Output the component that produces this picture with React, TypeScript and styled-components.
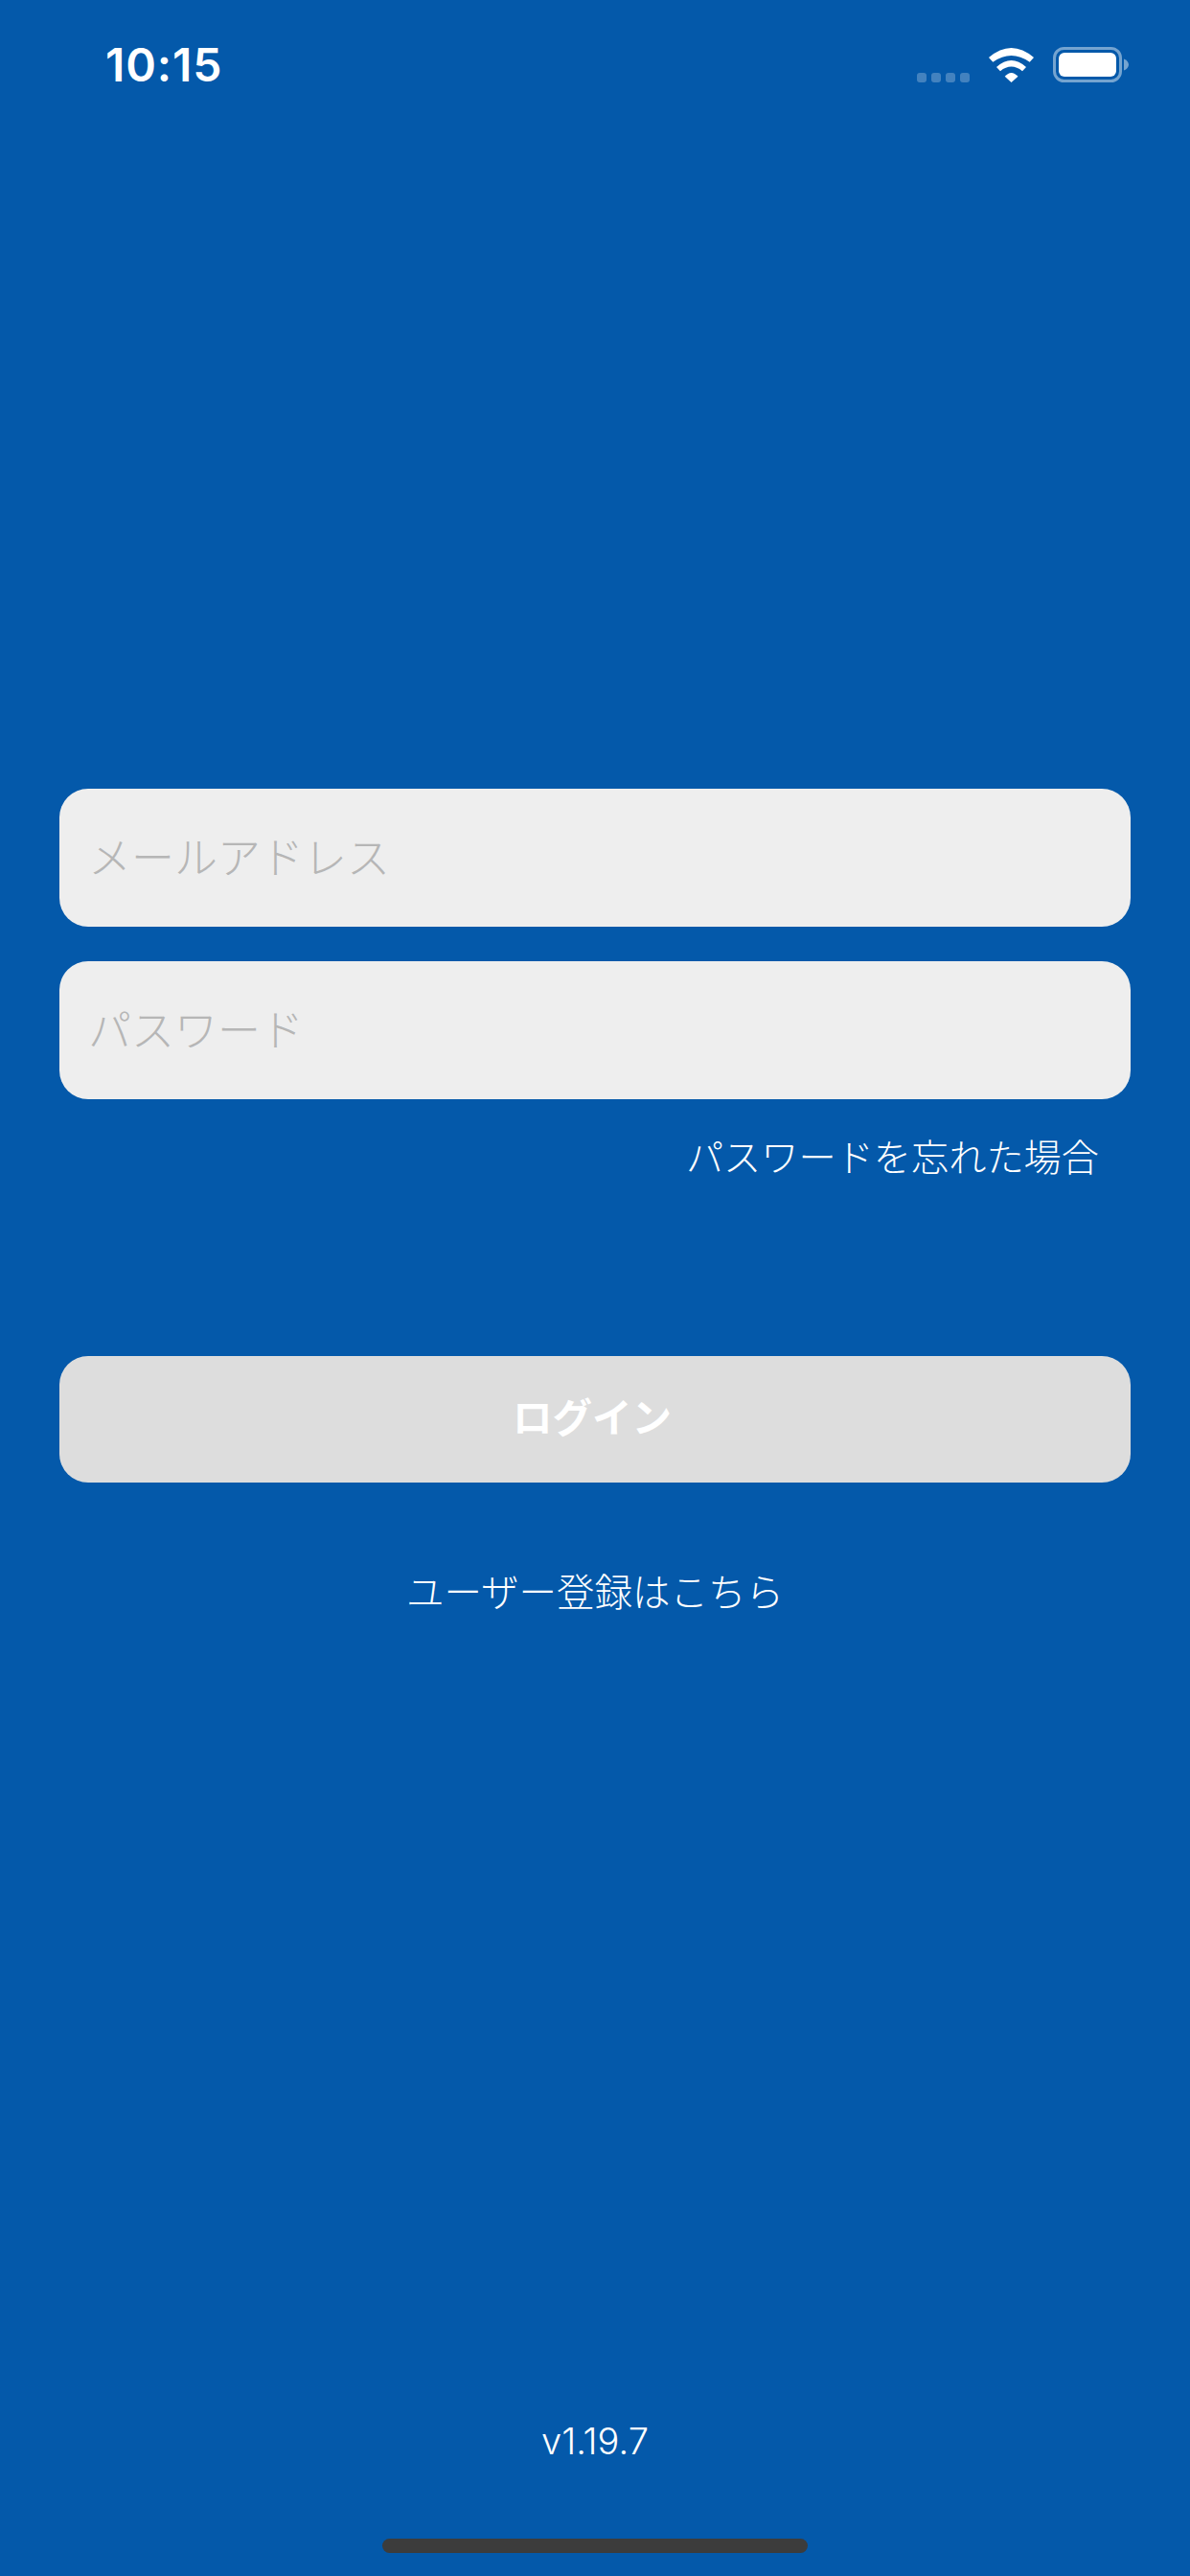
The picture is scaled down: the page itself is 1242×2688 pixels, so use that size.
import styled, { createGlobalStyle } from "styled-components";

const GlobalStyle = createGlobalStyle`
  html, body {
    margin: 0;
    padding: 0;
    background-color: #0459aa;
  }
`;

const Page = styled.div`
  display: flex;
  flex-direction: column;
  width: 1242px;
  height: 2688px;
  background-color: #0459aa;
  color: white;
  font-family: "Noto Sans CJK JP", sans-serif;
`;

const StatusBar = styled.div`
  display: flex;
  align-items: center;
  justify-content: space-between;
  height: 37px;
  padding: 49px 64px 0 110px;
`;

const Time = styled.span`
  font-family: Inter, "Liberation Sans", sans-serif;
  font-size: 48px;
  font-weight: 600;
  line-height: 37px;
  letter-spacing: 0.9px;
`;

const StatusIcons = styled.div`
  display: flex;
  align-items: flex-end;
`;

const SignalDots = styled.div`
  display: flex;
  gap: 5px;
  margin-right: 20px;
`;

const SignalDot = styled.span`
  width: 10px;
  height: 10px;
  border-radius: 3px;
  background-color: rgba(255, 255, 255, 0.25);
`;

const WifiIcon = styled.svg`
  display: block;
  width: 47px;
  height: 36px;
  margin-right: 20px;
`;

const BatteryIcon = styled.svg`
  display: block;
  width: 79px;
  height: 37px;
`;

const Form = styled.form`
  display: flex;
  flex-direction: column;
  margin: 737px 0 0;
  padding: 0 62px;
`;

const Field = styled.input<{ $gap?: boolean }>`
  box-sizing: border-box;
  width: 100%;
  height: 144px;
  margin-top: ${(p) => (p.$gap ? "36px" : "0")};
  padding: 0 30px 6px;
  border: none;
  border-radius: 30px;
  outline: none;
  background-color: #eeeeee;
  font-family: inherit;
  font-size: 45px;
  font-weight: 300;
  &::placeholder {
    color: #b6b6b6;
    opacity: 1;
  }
`;

const ForgotLink = styled.a`
  align-self: flex-end;
  margin-top: 28px;
  padding-right: 33px;
  font-size: 39.2px;
  font-weight: 300;
  line-height: 60px;
`;

const LoginButton = styled.button`
  height: 132px;
  margin-top: 180px;
  padding: 0 6px 8px 0;
  border: none;
  border-radius: 30px;
  background-color: #dddddd;
  color: white;
  font-family: inherit;
  font-size: 41.5px;
  font-weight: 700;
`;

const RegisterLink = styled.a`
  align-self: center;
  margin-top: 82px;
  font-size: 39.5px;
  font-weight: 300;
  line-height: 60px;
`;

const Footer = styled.div`
  display: flex;
  flex-direction: column;
  align-items: center;
  margin-top: auto;
  padding-bottom: 24px;
`;

const Version = styled.span`
  font-family: Inter, "Liberation Sans", sans-serif;
  font-size: 38px;
  font-weight: 300;
  line-height: 60px;
`;

const HomeBar = styled.div`
  width: 444px;
  height: 15px;
  margin-top: 72px;
  border-radius: 8px;
  background-color: #3c3c3c;
`;

export default function App() {
  return (
    <Page>
      <GlobalStyle />
      <StatusBar>
        <Time>10:15</Time>
        <StatusIcons>
          <SignalDots>
            {[1, 2, 3, 4].map((n) => (
              <SignalDot key={n} />
            ))}
          </SignalDots>
          <WifiIcon viewBox="0 0 47 36" fill="white">
            <path d="M0 10Q23.5 -10 47 10L42.7 14.8Q23.5 1.2 4.3 14.8Z" />
            <path d="M8 20Q23.5 6 39 20L35 24.2Q23.5 15 12 24.2Z" />
            <path d="M16.7 29.8Q23.5 22 30.5 29.8L23.5 36Z" />
          </WifiIcon>
          <BatteryIcon viewBox="0 0 79 37" fill="none">
            <rect
              x="1.5"
              y="1.5"
              width="69"
              height="34"
              rx="10"
              stroke="white"
              strokeOpacity="0.45"
              strokeWidth="3"
            />
            <rect x="6" y="6" width="60" height="25" rx="6" fill="white" />
            <path
              d="M74 12.5C77 13.5 79 16 79 18.5C79 21 77 23.5 74 24.5Z"
              fill="white"
              fillOpacity="0.45"
            />
          </BatteryIcon>
        </StatusIcons>
      </StatusBar>
      <Form>
        <Field placeholder="メールアドレス" />
        <Field $gap type="password" placeholder="パスワード" />
        <ForgotLink>パスワードを忘れた場合</ForgotLink>
        <LoginButton type="button">ログイン</LoginButton>
        <RegisterLink>ユーザー登録はこちら</RegisterLink>
      </Form>
      <Footer>
        <Version>v1.19.7</Version>
        <HomeBar />
      </Footer>
    </Page>
  );
}
